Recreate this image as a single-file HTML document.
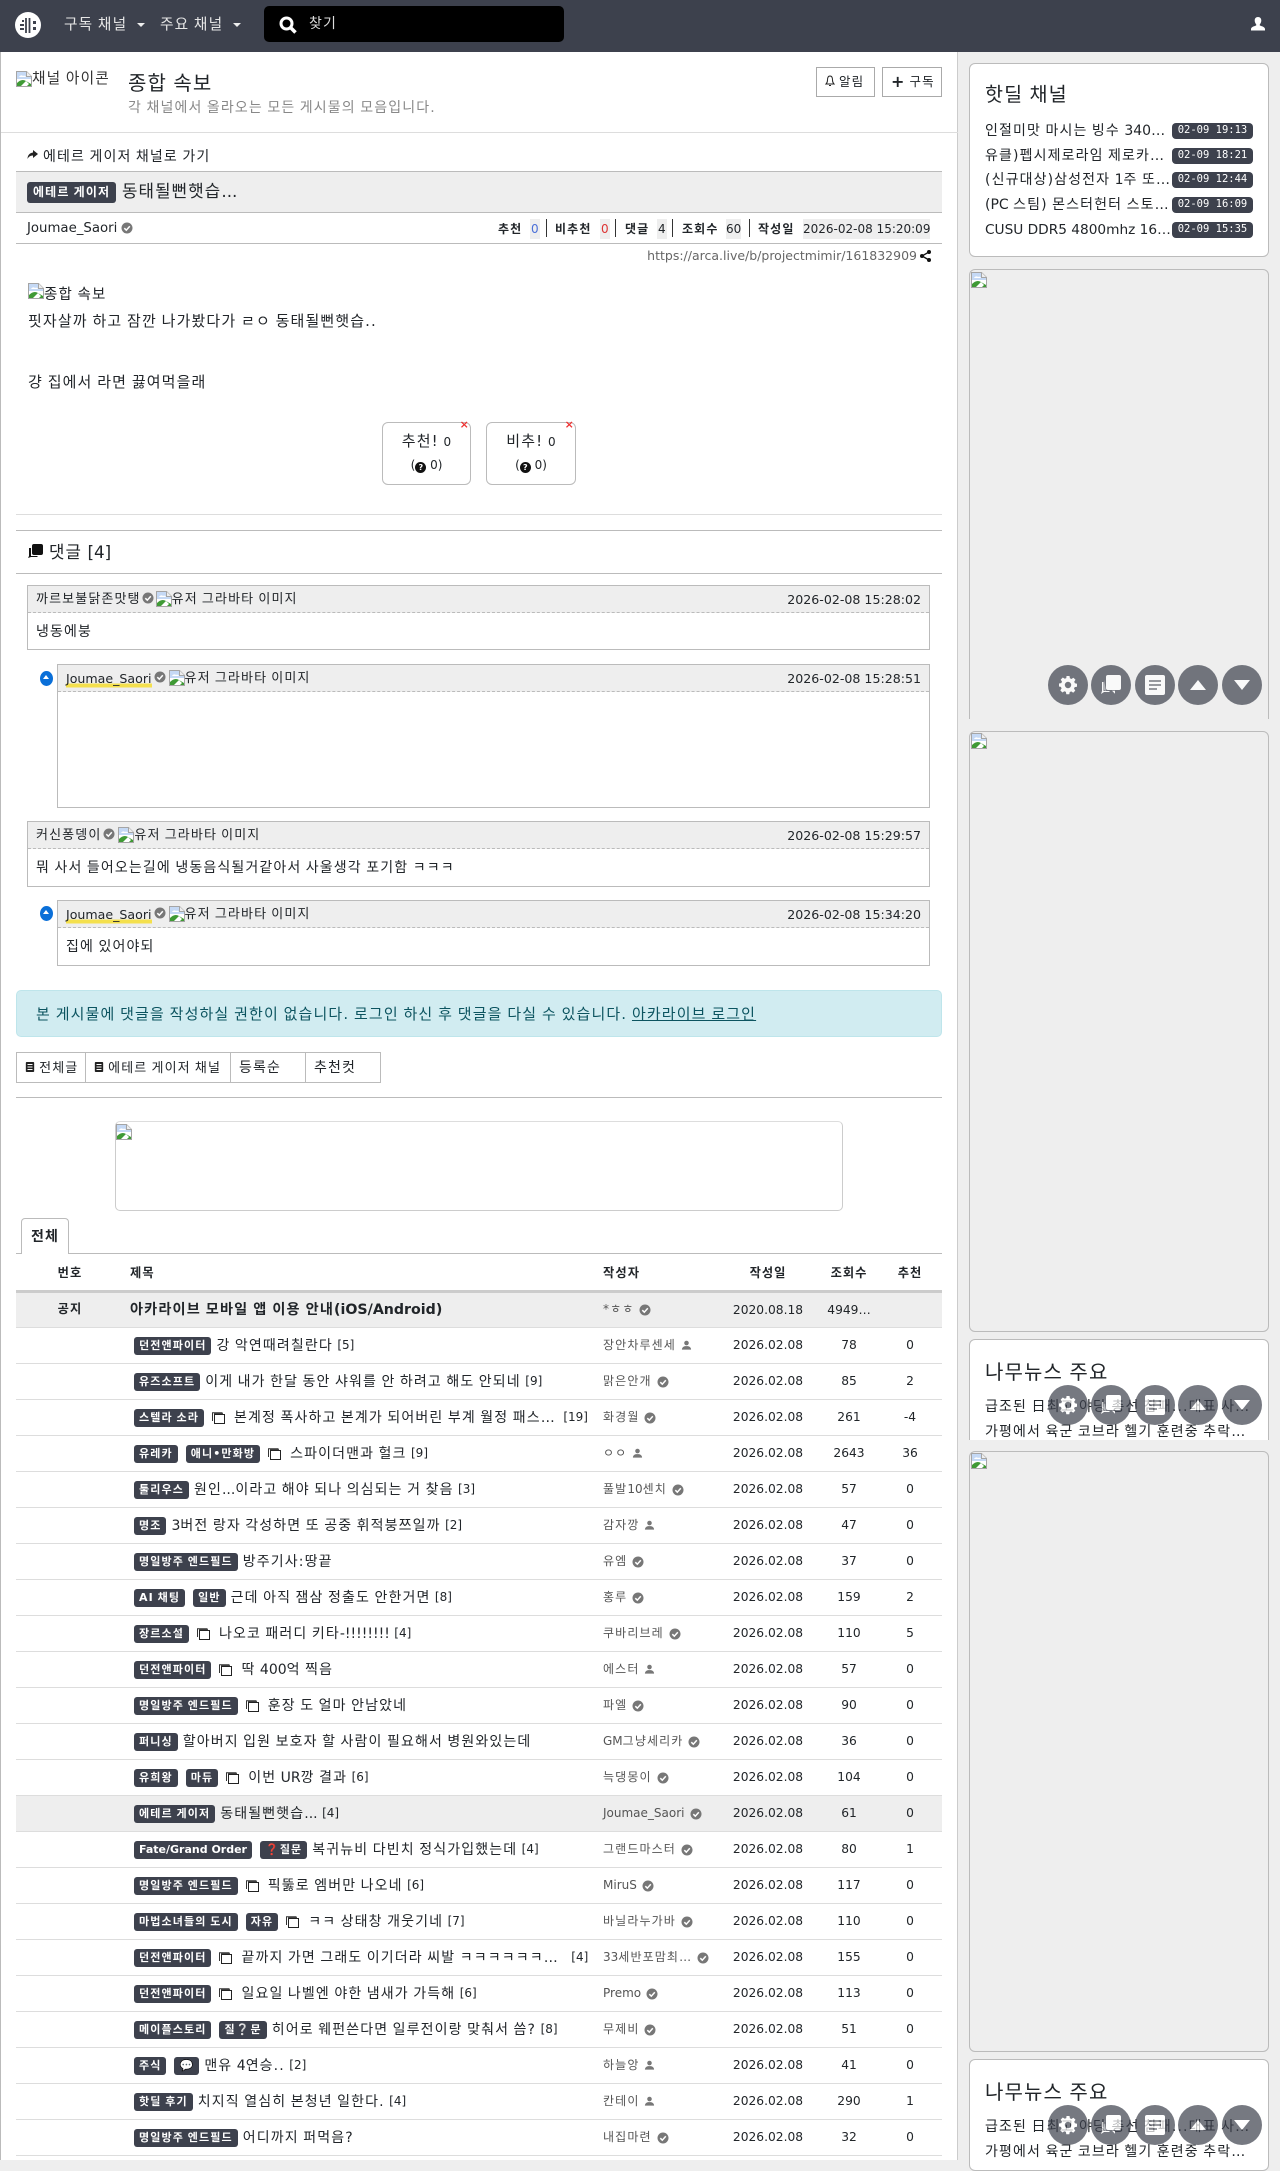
<!DOCTYPE html>
<html lang="ko"><head><meta charset="utf-8"><title>동태될뻔햇습...</title>
<style>
*{box-sizing:border-box}
html,body{margin:0;padding:0}
body{width:1280px;height:2160px;position:relative;overflow:hidden;background:#eee;font-family:"DejaVu Sans","Noto Sans CJK KR",sans-serif;color:#212529;font-size:14px;letter-spacing:.08em;word-spacing:-.08em}
.L,.d,.v,.u,.dt,.tm,.c,.st.nb,.yl,.q,.l2,small{letter-spacing:0;word-spacing:0}
.ab,.ab *{white-space:nowrap}
.ab{position:absolute}
svg{display:inline-block}
.main{position:absolute;left:0;top:52px;width:958px;height:2108px;background:#fff;border-left:1px solid #bbb;border-right:1px solid #ccc}
.bd{display:inline-block;background:#3d414d;color:#fff;font-weight:700;font-size:11px;height:18px;line-height:17px;padding:0 5px;border-radius:3px;flex:none}
.bd+.bd{margin-left:8px}
.r{position:absolute;left:16px;width:926px;height:36px;border-bottom:1px solid #ddd}
.r>div{position:absolute;top:0;height:35px;line-height:35px;font-size:12.25px;white-space:nowrap}
.t{left:118px;display:flex;align-items:center}
.r>.t{font-size:14px}
.t>span:not(.bd){position:relative;top:1px}
.t .x{margin-left:5px}
.t svg{margin:0 9px 0 8px;flex:none}
.t .c{font-size:12px;position:relative;top:-1px}
.r>.a{left:587px;color:#555;display:flex;align-items:center;font-size:12px}
.a svg{margin-left:5px}
.d{left:702px;width:100px;text-align:center}
.v{left:793px;width:80px;text-align:center}
.u{left:864px;width:60px;text-align:center}
.n{left:22px;width:64px;text-align:center}
.cm{position:absolute;border:1px solid #bbb;background:#fff;left:27px;width:903px}
.cm.rp{left:57px;width:873px}
.cm .h{height:27px;background:#eee;border-bottom:1px dashed #bbb;position:relative;font-size:13px;line-height:27px;padding-left:8px;display:flex;align-items:center;white-space:nowrap}
.cm .h .yl{font-size:12.600px}
.cm .h .dt{position:absolute;right:8px;top:0;font-size:12.600px;line-height:27px}
.cm .b{padding-left:8px;font-size:14px;line-height:39px;white-space:nowrap}
.yl{background:linear-gradient(transparent 68%,#f4e04d 68%,#f4e04d 84%,transparent 84%)}
.rd{position:absolute;left:40px;width:13px;height:15px;border-radius:50%;background:#0a6fd8}
.rd:after{content:"";position:absolute;left:3px;top:4px;border:3.500px solid transparent;border-top:0;border-bottom:4px solid #fff}
.st{position:absolute;top:219px;font-size:12px;line-height:20px;white-space:nowrap}
.st.k{font-weight:700}
.st.nb{background:#eee}
.sp{position:absolute;top:219px;width:1px;height:18px;background:#333}
.btn{position:absolute;top:1052px;height:31px;border:1px solid #bbb;border-left:0;background:#fff;line-height:31px;font-size:13px;white-space:nowrap;padding-left:8px}
.vt{position:absolute;top:422px;height:63px;border:1px solid #bbb;border-radius:6px;background:#fff;text-align:center;white-space:nowrap}
.vt .l1{font-size:15px;line-height:17px;margin-top:10px}
.vt .l1 small{font-size:12px}
.vt .l2{font-size:12px;line-height:17px;margin-top:6px}
.vt:after{content:"×";position:absolute;right:0;top:-5px;color:#e33;font-size:11px;font-weight:700}
.q{display:inline-block;width:11px;height:11px;border-radius:50%;background:#111;color:#fff;font-size:8px;line-height:11px;font-weight:700;vertical-align:-1px}
.card{position:absolute;left:969px;width:300px;border:1px solid #bbb;border-radius:6px}
.wh{background:#fff}
.li{position:absolute;left:985px;font-size:14px;line-height:20px;white-space:nowrap}
.tm{position:absolute;left:1172px;width:81px;height:16px;background:#3d414d;border-radius:4px;color:#fff;font-family:"DejaVu Sans Mono",monospace;font-size:10.500px;line-height:15px;text-align:center}
.fab{position:absolute;width:40px;height:40px;border-radius:50%;background:#3d414d;opacity:.7;display:flex;align-items:center;justify-content:center}
.h2{position:absolute;left:985px;font-size:19.600px;line-height:24px;white-space:nowrap}
</style></head><body>
<svg width="0" height="0" style="position:absolute">
<symbol id="br" viewBox="0 0 16 16"><path d="M.5.5h10l5 5v10H.5z" fill="#fff" stroke="#a5a5a5"/><path d="M1 1h9.500l4.500 4.500V8H1z" fill="#c5d9f5"/><path d="M3 6c1-2 3-2 4-1 1-1 3 0 3 1z" fill="#fff"/><path d="M1 15V12c3-3 6-4 9-2l5 3v2z" fill="#3f9a35"/><path d="M10.500.5v5h5" fill="#eee" stroke="#a5a5a5"/><path d="M5 15l5-5 3 3-2 2z" fill="#fff"/></symbol>
<symbol id="ck" viewBox="0 0 12 12"><circle cx="6" cy="6" r="5.500" fill="#777"/><path d="M3.300 6.200l2 2 3.500-4" fill="none" stroke="#fff" stroke-width="1.500"/></symbol>
<symbol id="us" viewBox="0 0 12 12"><circle cx="6" cy="3.300" r="2.500" fill="#777"/><path d="M1 10.500c0-2.500 2-3.500 3.500-3.800h3c1.500.3 3.500 1.300 3.500 3.800z" fill="#777"/></symbol>
<symbol id="th" viewBox="0 0 13 12"><path d="M.5 9V.8h10" fill="none" stroke="#333"/><rect x="2.500" y="2.500" width="10" height="9" fill="#fff" stroke="#222"/><path d="M2 2h9" stroke="#222" stroke-width="1.500"/></symbol>
<symbol id="dc" viewBox="0 0 12 12"><rect x="1" y="0" width="10" height="12" rx="1" fill="#222"/><path d="M3 3h6M3 6h6M3 9h6" stroke="#fff" stroke-width="1.200"/></symbol>
</svg>

<div class="ab" style="left:0;top:0;width:1280px;height:52px;background:#3d414d"></div>
<svg class="ab" style="left:15px;top:12px" width="26" height="26" viewBox="0 0 26 26"><circle cx="13" cy="13" r="13" fill="#fff"/><path d="M11 6v15M14.500 6v15" stroke="#3d414d" stroke-width="1.800"/><path d="M5 12h4v2H5zM5 16h4v2H5zM7 8h2v2H7zM18 9h3v3h-3zM18 15h3v3h-3z" fill="#3d414d"/></svg>
<div class="ab" style="left:64px;top:15px;color:#e6e6e6;font-size:14.700px;line-height:20px">구독 채널</div>
<div class="ab" style="left:137px;top:23px;border:4px solid transparent;border-top:4px solid #eee;border-bottom:0"></div>
<div class="ab" style="left:160px;top:15px;color:#e6e6e6;font-size:14.700px;line-height:20px">주요 채널</div>
<div class="ab" style="left:233px;top:23px;border:4px solid transparent;border-top:4px solid #eee;border-bottom:0"></div>
<div class="ab" style="left:264px;top:6px;width:300px;height:36px;background:#000;border-radius:5px"></div>
<svg class="ab" style="left:279px;top:16px" width="18" height="18" viewBox="0 0 18 18"><circle cx="7.500" cy="7.500" r="5.500" fill="none" stroke="#fff" stroke-width="3"/><path d="M11.500 11.500l5 5" stroke="#fff" stroke-width="3.500"/></svg>
<div class="ab" style="left:309px;top:14px;color:#ddd;font-size:14px;line-height:20px">찾기</div>
<svg class="ab" style="left:1250px;top:16px" width="16" height="16" viewBox="0 0 16 16"><path d="M8 1c2.200 0 3.300 1.500 3.300 3.500 0 1.500-.7 3-1.500 3.800v1.200c2 .7 5.200 1.600 5.200 3.500v1.500H1V13c0-1.900 3.200-2.800 5.200-3.500V8.300C5.400 7.500 4.700 6 4.700 4.500 4.700 2.500 5.800 1 8 1z" fill="#fff"/></svg>

<div class="main"></div>

<svg class="ab" style="left:16px;top:71px" width="16" height="16"><use href="#br"/></svg>
<div class="ab" style="left:32px;top:69px;width:80px;overflow:hidden;font-size:14.700px;line-height:20px;color:#333">채널 아이콘</div>
<div class="ab" style="left:128px;top:71px;font-size:20px;line-height:24px">종합 속보</div>
<div class="ab" style="left:128px;top:98px;font-size:14px;line-height:20px;color:#888">각 채널에서 올라오는 모든 게시물의 모음입니다.</div>
<div class="ab" style="left:816px;top:67px;width:59px;height:30px;border:1px solid #aaa;background:#fff;font-size:12.500px;line-height:28px;padding-left:8px"><svg width="10" height="12" viewBox="0 0 10 12" style="vertical-align:-1px"><path d="M5 1C3 1 2.500 3 2.500 5c0 2-.5 3-1.500 4h8c-1-1-1.500-2-1.500-4S7 1 5 1zM4 10.500h2" fill="none" stroke="#222"/></svg> 알림</div>
<div class="ab" style="left:882px;top:67px;width:60px;height:30px;border:1px solid #aaa;background:#fff;font-size:12.500px;line-height:28px;padding-left:8px"><b style="font-size:16px;vertical-align:-1px">+</b> 구독</div>
<div class="ab" style="left:1px;top:132px;width:957px;height:1px;background:#ddd"></div>

<svg class="ab" style="left:27px;top:150px" width="11" height="10" viewBox="0 0 11 10"><path d="M6 0l5 4-5 4V5.500C3 5.500 1.500 7 .5 9 .5 5 3 2.800 6 2.500z" fill="#222"/></svg>
<div class="ab" style="left:43px;top:147px;font-size:14px;line-height:20px">에테르 게이저 채널로 가기</div>
<div class="ab" style="left:16px;top:171px;width:926px;height:42px;background:#eee;border-top:1px solid #bbb;border-bottom:1px solid #bbb"></div>
<div class="ab" style="left:27px;top:182px;height:21px;background:#3d414d;color:#fff;font-weight:700;font-size:12px;line-height:20px;padding:0 6px;border-radius:3px">에테르 게이저</div>
<div class="ab" style="left:122px;top:180px;font-size:16.800px;line-height:22px">동태될뻔햇습<span class="L">...</span></div>
<div class="ab L" style="left:27px;top:219px;font-size:13.300px;line-height:20px">Joumae_Saori</div>
<svg class="ab" style="left:121px;top:222px" width="12" height="12"><use href="#ck"/></svg>
<div class="st k" style="left:498px">추천</div><div class="st nb" style="left:530px;color:#4a6fd8;padding:0 1px">0</div><div class="sp" style="left:546px"></div>
<div class="st k" style="left:555px">비추천</div><div class="st nb" style="left:600px;color:#d33;padding:0 1px">0</div><div class="sp" style="left:615px"></div>
<div class="st k" style="left:625px">댓글</div><div class="st nb" style="left:657px;padding:0 1px">4</div><div class="sp" style="left:672px"></div>
<div class="st k" style="left:682px">조회수</div><div class="st nb" style="left:726px">60</div><div class="sp" style="left:749px"></div>
<div class="st k" style="left:758px">작성일</div><div class="st nb" style="left:803px">2026-02-08 15:20:09</div>
<div class="ab" style="left:16px;top:243px;width:926px;height:1px;background:#bbb"></div>
<div class="ab L" style="left:640px;top:247px;width:277px;overflow:hidden;font-size:12.500px;line-height:18px;color:#666;text-align:right">https://arca.live/b/projectmimir/161832909</div>
<svg class="ab" style="left:920px;top:250px" width="11" height="12" viewBox="0 0 11 12"><circle cx="9" cy="2" r="2" fill="#111"/><circle cx="2" cy="6" r="2" fill="#111"/><circle cx="9" cy="10" r="2" fill="#111"/><path d="M9 2L2 6l7 4" fill="none" stroke="#111" stroke-width="1.300"/></svg>

<svg class="ab" style="left:28px;top:283px" width="16" height="16"><use href="#br"/></svg>
<div class="ab" style="left:44px;top:285px;font-size:14.500px;line-height:20px">종합 속보</div>
<div class="ab" style="left:28px;top:311px;font-size:15px;line-height:20px">핏자살까 하고 잠깐 나가봤다가 ㄹㅇ 동태될뻔햇습..</div>
<div class="ab" style="left:28px;top:372px;font-size:15px;line-height:20px">걍 집에서 라면 끓여먹을래</div>
<div class="vt" style="left:382px;width:89px"><div class="l1">추천! <small>0</small></div><div class="l2">(<span class="q">?</span> 0)</div></div>
<div class="vt" style="left:486px;width:90px"><div class="l1">비추! <small>0</small></div><div class="l2">(<span class="q">?</span> 0)</div></div>
<div class="ab" style="left:16px;top:514px;width:926px;height:1px;background:#ddd"></div>
<div class="ab" style="left:16px;top:530px;width:926px;height:1px;background:#bbb"></div>
<svg class="ab" style="left:27px;top:544px" width="16" height="15" viewBox="0 0 16 15"><path d="M2 4v8l-1 2 3-1h6l1-1H4V4z" fill="#111"/><rect x="5" y="0" width="11" height="11" rx="2" fill="#111"/></svg>
<div class="ab" style="left:49px;top:541px;font-size:16.800px;line-height:22px">댓글 <span class="L">[4]</span></div>
<div class="ab" style="left:16px;top:573px;width:926px;height:1px;background:#bbb"></div>

<div class="cm" style="top:585px;height:65px"><div class="h">까르보불닭존맛탱<svg width="12" height="12" style="margin:-2px 2px 0 1px"><use href="#ck"/></svg><svg width="16" height="16"><use href="#br"/></svg>유저 그라바타 이미지<span class="dt">2026-02-08 15:28:02</span></div><div class="b">냉동에붕</div></div>
<div class="rd" style="top:671px"></div>
<div class="cm rp" style="top:664px;height:144px"><div class="h"><span class="yl">Joumae_Saori</span><svg width="12" height="12" style="margin:-2px 3px 0 2px"><use href="#ck"/></svg><svg width="16" height="16"><use href="#br"/></svg>유저 그라바타 이미지<span class="dt">2026-02-08 15:28:51</span></div></div>
<div class="cm" style="top:821px;height:66px"><div class="h">커신퐁뎅이<svg width="12" height="12" style="margin:-2px 3px 0 2px"><use href="#ck"/></svg><svg width="16" height="16"><use href="#br"/></svg>유저 그라바타 이미지<span class="dt">2026-02-08 15:29:57</span></div><div class="b">뭐 사서 들어오는길에 냉동음식될거같아서 사울생각 포기함 ㅋㅋㅋ</div></div>
<div class="rd" style="top:906px"></div>
<div class="cm rp" style="top:900px;height:66px"><div class="h"><span class="yl">Joumae_Saori</span><svg width="12" height="12" style="margin:-2px 3px 0 2px"><use href="#ck"/></svg><svg width="16" height="16"><use href="#br"/></svg>유저 그라바타 이미지<span class="dt">2026-02-08 15:34:20</span></div><div class="b">집에 있어야되</div></div>

<div class="ab" style="left:16px;top:990px;width:926px;height:47px;background:#d1ecf1;border:1px solid #bee5eb;border-radius:5px;color:#0c5460;font-size:15px;line-height:47px;padding-left:19px">본 게시물에 댓글을 작성하실 권한이 없습니다. 로그인 하신 후 댓글을 다실 수 있습니다. <u>아카라이브 로그인</u></div>

<div class="btn" style="left:16px;width:70px;border-left:1px solid #bbb"><svg width="10" height="12" style="vertical-align:-1px"><use href="#dc"/></svg> 전체글</div>
<div class="btn" style="left:86px;width:145px"><svg width="10" height="12" style="vertical-align:-1px"><use href="#dc"/></svg> 에테르 게이저 채널</div>
<div class="btn" style="left:231px;width:75px;font-size:14px">등록순</div>
<div class="btn" style="left:306px;width:75px;font-size:14px">추천컷</div>
<div class="ab" style="left:16px;top:1097px;width:926px;height:1px;background:#bbb"></div>

<div class="ab" style="left:115px;top:1121px;width:728px;height:90px;border:1px solid #ccc;border-top-color:#ddd;border-radius:5px;background:#fff"></div>
<svg class="ab" style="left:116px;top:1124px" width="16" height="16"><use href="#br"/></svg>

<div class="ab" style="left:16px;top:1253px;width:926px;height:1px;background:#bbb"></div>
<div class="ab" style="left:21px;top:1218px;width:48px;height:36px;background:#fff;border:1px solid #bbb;border-bottom:0;border-radius:4px 4px 0 0;font-weight:700;font-size:14px;line-height:37px;text-align:center">전체</div>

<div class="r" style="top:1256px;height:35px;border:0;font-weight:700">
<div class="n" style="top:0">번호</div><div style="left:114px">제목</div><div style="left:587px">작성자</div><div class="d" style="letter-spacing:.08em">작성일</div><div class="v" style="letter-spacing:.08em">조회수</div><div class="u" style="letter-spacing:.08em">추천</div></div>
<div class="ab" style="left:16px;top:1290px;width:926px;height:3px;background:#ccc"></div>

<div class="r" style="top:1293px;height:35px;background:#eee"><div class="n" style="font-weight:700;height:33px;line-height:33px">공지</div><div style="left:114px;font-size:14.200px;font-weight:700;height:33px;line-height:35px">아카라이브 모바일 앱 이용 안내<span class="L">(iOS/Android)</span></div><div class="a" style="height:33px">*ㅎㅎ<svg width="12" height="12"><use href="#ck"/></svg></div><div class="d" style="height:33px;line-height:34px">2020.08.18</div><div class="v" style="height:33px;line-height:34px">4949…</div><div class="u"></div></div>

<div class="r" style="top:1328px"><div class="t"><span class="bd">던전앤파이터</span><span class="x">강 악연때려칠란다 <span class="c">[5]</span></span></div><div class="a">장안차루센세<svg width="11" height="11"><use href="#us"/></svg></div><div class="d">2026.02.08</div><div class="v">78</div><div class="u">0</div></div>
<div class="r" style="top:1364px"><div class="t"><span class="bd">유즈소프트</span><span class="x">이게 내가 한달 동안 샤워를 안 하려고 해도 안되네 <span class="c">[9]</span></span></div><div class="a">맑은안개<svg width="12" height="12"><use href="#ck"/></svg></div><div class="d">2026.02.08</div><div class="v">85</div><div class="u">2</div></div>
<div class="r" style="top:1400px"><div class="t"><span class="bd">스텔라 소라</span><svg width="13" height="12"><use href="#th"/></svg><span>본계정 폭사하고 본계가 되어버린 부계 월정 패스… <span class="c" style="margin-left:3px">[19]</span></span></div><div class="a">화경월<svg width="12" height="12"><use href="#ck"/></svg></div><div class="d">2026.02.08</div><div class="v">261</div><div class="u">-4</div></div>
<div class="r" style="top:1436px"><div class="t"><span class="bd">유레카</span><span class="bd">애니•만화방</span><svg width="13" height="12"><use href="#th"/></svg><span>스파이더맨과 헐크 <span class="c">[9]</span></span></div><div class="a">ㅇㅇ<svg width="11" height="11"><use href="#us"/></svg></div><div class="d">2026.02.08</div><div class="v">2643</div><div class="u">36</div></div>
<div class="r" style="top:1472px"><div class="t"><span class="bd">툴리우스</span><span class="x">원인<span class="L">...</span>이라고 해야 되나 의심되는 거 찾음 <span class="c">[3]</span></span></div><div class="a">풀발<span class="L">10</span>센치<svg width="12" height="12"><use href="#ck"/></svg></div><div class="d">2026.02.08</div><div class="v">57</div><div class="u">0</div></div>
<div class="r" style="top:1508px"><div class="t"><span class="bd">명조</span><span class="x"><span class="L">3</span>버전 랑자 각성하면 또 공중 휘적붕쯔일까 <span class="c">[2]</span></span></div><div class="a">감자깡<svg width="11" height="11"><use href="#us"/></svg></div><div class="d">2026.02.08</div><div class="v">47</div><div class="u">0</div></div>
<div class="r" style="top:1544px"><div class="t"><span class="bd">명일방주 엔드필드</span><span class="x">방주기사:땅끝</span></div><div class="a">유엠<svg width="12" height="12"><use href="#ck"/></svg></div><div class="d">2026.02.08</div><div class="v">37</div><div class="u">0</div></div>
<div class="r" style="top:1580px"><div class="t"><span class="bd">AI 채팅</span><span class="bd">일반</span><span class="x">근데 아직 잼삼 정출도 안한거면 <span class="c">[8]</span></span></div><div class="a">홍루<svg width="12" height="12"><use href="#ck"/></svg></div><div class="d">2026.02.08</div><div class="v">159</div><div class="u">2</div></div>
<div class="r" style="top:1616px"><div class="t"><span class="bd">장르소설</span><svg width="13" height="12"><use href="#th"/></svg><span>나오코 패러디 키타<span class="L">-!!!!!!!!</span> <span class="c">[4]</span></span></div><div class="a">쿠바리브레<svg width="12" height="12"><use href="#ck"/></svg></div><div class="d">2026.02.08</div><div class="v">110</div><div class="u">5</div></div>
<div class="r" style="top:1652px"><div class="t"><span class="bd">던전앤파이터</span><svg width="13" height="12"><use href="#th"/></svg><span>딱 <span class="L">400</span>억 찍음</span></div><div class="a">에스터<svg width="11" height="11"><use href="#us"/></svg></div><div class="d">2026.02.08</div><div class="v">57</div><div class="u">0</div></div>
<div class="r" style="top:1688px"><div class="t"><span class="bd">명일방주 엔드필드</span><svg width="13" height="12"><use href="#th"/></svg><span>훈장 도 얼마 안남았네</span></div><div class="a">파엘<svg width="12" height="12"><use href="#ck"/></svg></div><div class="d">2026.02.08</div><div class="v">90</div><div class="u">0</div></div>
<div class="r" style="top:1724px"><div class="t"><span class="bd">퍼니싱</span><span class="x">할아버지 입원 보호자 할 사람이 필요해서 병원와있는데</span></div><div class="a"><span class="L">GM</span>그냥세리카<svg width="12" height="12"><use href="#ck"/></svg></div><div class="d">2026.02.08</div><div class="v">36</div><div class="u">0</div></div>
<div class="r" style="top:1760px"><div class="t"><span class="bd">유희왕</span><span class="bd">마듀</span><svg width="13" height="12"><use href="#th"/></svg><span>이번 <span class="L">UR</span>깡 결과 <span class="c">[6]</span></span></div><div class="a">늑댕몽이<svg width="12" height="12"><use href="#ck"/></svg></div><div class="d">2026.02.08</div><div class="v">104</div><div class="u">0</div></div>
<div class="r" style="top:1796px;background:#eee"><div class="t"><span class="bd">에테르 게이저</span><span class="x">동태될뻔햇습<span class="L">...</span> <span class="c">[4]</span></span></div><div class="a"><span class="L">Joumae_Saori</span><svg width="12" height="12"><use href="#ck"/></svg></div><div class="d">2026.02.08</div><div class="v">61</div><div class="u">0</div></div>
<div class="r" style="top:1832px"><div class="t"><span class="bd L">Fate/Grand Order</span><span class="bd"><span style="color:#d9342b">❓</span>질문</span><span class="x">복귀뉴비 다빈치 정식가입했는데 <span class="c">[4]</span></span></div><div class="a">그랜드마스터<svg width="12" height="12"><use href="#ck"/></svg></div><div class="d">2026.02.08</div><div class="v">80</div><div class="u">1</div></div>
<div class="r" style="top:1868px"><div class="t"><span class="bd">명일방주 엔드필드</span><svg width="13" height="12"><use href="#th"/></svg><span>픽뚫로 엠버만 나오네 <span class="c">[6]</span></span></div><div class="a"><span class="L">MiruS</span><svg width="12" height="12"><use href="#ck"/></svg></div><div class="d">2026.02.08</div><div class="v">117</div><div class="u">0</div></div>
<div class="r" style="top:1904px"><div class="t"><span class="bd">마법소녀들의 도시</span><span class="bd">자유</span><svg width="13" height="12"><use href="#th"/></svg><span>ㅋㅋ 상태창 개웃기네 <span class="c">[7]</span></span></div><div class="a">바닐라누가바<svg width="12" height="12"><use href="#ck"/></svg></div><div class="d">2026.02.08</div><div class="v">110</div><div class="u">0</div></div>
<div class="r" style="top:1940px"><div class="t"><span class="bd">던전앤파이터</span><svg width="13" height="12"><use href="#th"/></svg><span>끝까지 가면 그래도 이기더라 씨발 ㅋㅋㅋㅋㅋㅋ… <span class="c" style="margin-left:8px">[4]</span></span></div><div class="a"><span class="L">33</span>세반포맘최…<svg width="12" height="12"><use href="#ck"/></svg></div><div class="d">2026.02.08</div><div class="v">155</div><div class="u">0</div></div>
<div class="r" style="top:1976px"><div class="t"><span class="bd">던전앤파이터</span><svg width="13" height="12"><use href="#th"/></svg><span>일요일 나벨엔 야한 냄새가 가득해 <span class="c">[6]</span></span></div><div class="a"><span class="L">Premo</span><svg width="12" height="12"><use href="#ck"/></svg></div><div class="d">2026.02.08</div><div class="v">113</div><div class="u">0</div></div>
<div class="r" style="top:2012px"><div class="t"><span class="bd">메이플스토리</span><span class="bd">질❔문</span><span class="x">히어로 웨펀쓴다면 일루전이랑 맞춰서 씀? <span class="c">[8]</span></span></div><div class="a">무제비<svg width="12" height="12"><use href="#ck"/></svg></div><div class="d">2026.02.08</div><div class="v">51</div><div class="u">0</div></div>
<div class="r" style="top:2048px"><div class="t"><span class="bd">주식</span><span class="bd">💬</span><span class="x">맨유 <span class="L">4</span>연승.. <span class="c">[2]</span></span></div><div class="a">하늘앙<svg width="11" height="11"><use href="#us"/></svg></div><div class="d">2026.02.08</div><div class="v">41</div><div class="u">0</div></div>
<div class="r" style="top:2084px"><div class="t"><span class="bd">핫딜 후기</span><span class="x">치지직 열심히 본청년 일한다. <span class="c">[4]</span></span></div><div class="a">칸테이<svg width="11" height="11"><use href="#us"/></svg></div><div class="d">2026.02.08</div><div class="v">290</div><div class="u">1</div></div>
<div class="r" style="top:2120px"><div class="t"><span class="bd">명일방주 엔드필드</span><span class="x">어디까지 퍼먹음?</span></div><div class="a">내집마련<svg width="12" height="12"><use href="#ck"/></svg></div><div class="d">2026.02.08</div><div class="v">32</div><div class="u">0</div></div>

<div class="card wh" style="top:63px;height:194px"></div>
<div class="h2" style="top:83px">핫딜 채널</div>
<div class="li" style="top:121px">인절미맛 마시는 빙수 <span class="L">340…</span></div><div class="tm" style="top:123px">02-09 19:13</div>
<div class="li" style="top:146px">유클)펩시제로라임 제로카…</div><div class="tm" style="top:148px">02-09 18:21</div>
<div class="li" style="top:170px">(신규대상)삼성전자 <span class="L">1</span>주 또…</div><div class="tm" style="top:172px">02-09 12:44</div>
<div class="li" style="top:195px"><span class="L">(PC </span>스팀) 몬스터헌터 스토…</div><div class="tm" style="top:197px">02-09 16:09</div>
<div class="li L" style="top:220px;font-size:13.700px">CUSU DDR5 4800mhz 16…</div><div class="tm" style="top:222px">02-09 15:35</div>

<div class="card" style="top:269px;height:460px;clip-path:inset(0 0 10px 0)"></div>
<svg class="ab" style="left:971px;top:272px" width="16" height="16"><use href="#br"/></svg>
<div class="card" style="top:731px;height:601px"></div>
<svg class="ab" style="left:971px;top:733px" width="16" height="16"><use href="#br"/></svg>

<div class="card wh" style="top:1339px;height:112px;clip-path:inset(0 0 11px 0)"></div>
<div class="h2" style="top:1360px;left:985px;font-size:20px">나무뉴스 주요</div>
<div class="li" style="top:1397px">급조된 日최고 야당 총선 참패...대표 사…</div>
<div class="li" style="top:1422px;height:18px;overflow:hidden">가평에서 육군 코브라 헬기 훈련중 추락…</div>

<div class="card" style="top:1451px;height:601px"></div>
<svg class="ab" style="left:971px;top:1453px" width="16" height="16"><use href="#br"/></svg>
<div class="card wh" style="top:2059px;height:112px"></div>
<div class="h2" style="top:2080px;left:985px;font-size:20px">나무뉴스 주요</div>
<div class="li" style="top:2117px">급조된 日최고 야당 총선 참패...대표 사…</div>
<div class="li" style="top:2142px;height:18px;overflow:hidden">가평에서 육군 코브라 헬기 훈련중 추락…</div>

<svg width="0" height="0" style="position:absolute">
<symbol id="f1" viewBox="0 0 20 20"><path d="M8.500 1h3l.4 2.300 1.500.7 2-1.300 2.100 2.100-1.300 2 .7 1.500L19 8.700v3l-2.300.4-.7 1.500 1.300 2-2.100 2.100-2-1.300-1.500.7-.4 2.100h-3l-.4-2.300-1.500-.7-2 1.300-2.100-2.100 1.300-2-.7-1.500L1 11.500v-3l2.300-.4.7-1.500-1.300-2 2.100-2.100 2 1.300 1.500-.7zM10 6.800A3.200 3.200 0 1 0 10 13.200 3.200 3.200 0 1 0 10 6.800z" fill="#fff" fill-rule="evenodd"/></symbol>
<symbol id="f2" viewBox="0 0 20 20"><rect x="5" y="0" width="15" height="15" rx="2" fill="#fff"/><path d="M3.500 5v9.500c0 .8.500 1.300 1.300 1.300h6.200l3 3v-3h-2H4.500zM1 7v9l-1 3 3-2h6L8 16H2.500V7z" fill="#fff"/></symbol>
<symbol id="f3" viewBox="0 0 20 20"><rect width="20" height="20" rx="2" fill="#fff"/><path d="M4 6h12M4 10h12M4 14h8" stroke="#72747c" stroke-width="2"/></symbol>
<symbol id="f4" viewBox="0 0 16 10"><path d="M8 0l8 10H0z" fill="#fff"/></symbol>
<symbol id="f5" viewBox="0 0 16 10"><path d="M0 0h16L8 10z" fill="#fff"/></symbol>
</svg>

<div class="fab" style="left:1048px;top:665px"><svg width="20" height="20"><use href="#f1"/></svg></div>
<div class="fab" style="left:1091px;top:665px"><svg width="20" height="20"><use href="#f2"/></svg></div>
<div class="fab" style="left:1135px;top:665px"><svg width="20" height="20"><use href="#f3"/></svg></div>
<div class="fab" style="left:1178px;top:665px"><svg width="16" height="10"><use href="#f4"/></svg></div>
<div class="fab" style="left:1222px;top:665px"><svg width="16" height="10"><use href="#f5"/></svg></div>
<div class="fab" style="left:1048px;top:1385px"><svg width="20" height="20"><use href="#f1"/></svg></div>
<div class="fab" style="left:1091px;top:1385px"><svg width="20" height="20"><use href="#f2"/></svg></div>
<div class="fab" style="left:1135px;top:1385px"><svg width="20" height="20"><use href="#f3"/></svg></div>
<div class="fab" style="left:1178px;top:1385px"><svg width="16" height="10"><use href="#f4"/></svg></div>
<div class="fab" style="left:1222px;top:1385px"><svg width="16" height="10"><use href="#f5"/></svg></div>
<div class="fab" style="left:1048px;top:2105px"><svg width="20" height="20"><use href="#f1"/></svg></div>
<div class="fab" style="left:1091px;top:2105px"><svg width="20" height="20"><use href="#f2"/></svg></div>
<div class="fab" style="left:1135px;top:2105px"><svg width="20" height="20"><use href="#f3"/></svg></div>
<div class="fab" style="left:1178px;top:2105px"><svg width="16" height="10"><use href="#f4"/></svg></div>
<div class="fab" style="left:1222px;top:2105px"><svg width="16" height="10"><use href="#f5"/></svg></div>
</body></html>
